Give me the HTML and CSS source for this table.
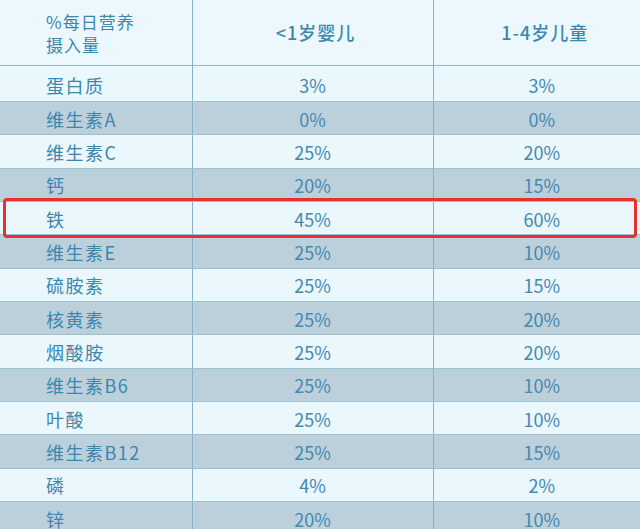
FILE: index.html
```html
<!DOCTYPE html>
<html lang="zh-CN">
<head>
<meta charset="utf-8">
<title>每日营养摄入量</title>
<link rel="stylesheet" href="styles.css">
</head>
<body>
<div class="sheet">
  <table class="nutri">
    <colgroup>
      <col class="c-name">
      <col class="c-infant">
      <col class="c-child">
    </colgroup>
    <thead>
      <tr>
        <th class="name">%每日营养<br>摄入量</th>
        <th>&lt;1岁婴儿</th>
        <th>1-4岁儿童</th>
      </tr>
    </thead>
    <tbody>
      <tr class="first"><td class="name">蛋白质</td><td>3%</td><td>3%</td></tr>
      <tr class="alt"><td class="name">维生素A</td><td>0%</td><td>0%</td></tr>
      <tr><td class="name">维生素C</td><td>25%</td><td>20%</td></tr>
      <tr class="alt"><td class="name">钙</td><td>20%</td><td>15%</td></tr>
      <tr><td class="name">铁</td><td>45%</td><td>60%</td></tr>
      <tr class="alt"><td class="name">维生素E</td><td>25%</td><td>10%</td></tr>
      <tr><td class="name">硫胺素</td><td>25%</td><td>15%</td></tr>
      <tr class="alt"><td class="name">核黄素</td><td>25%</td><td>20%</td></tr>
      <tr><td class="name">烟酸胺</td><td>25%</td><td>20%</td></tr>
      <tr class="alt"><td class="name">维生素B6</td><td>25%</td><td>10%</td></tr>
      <tr><td class="name">叶酸</td><td>25%</td><td>10%</td></tr>
      <tr class="alt"><td class="name">维生素B12</td><td>25%</td><td>15%</td></tr>
      <tr><td class="name">磷</td><td>4%</td><td>2%</td></tr>
      <tr class="alt"><td class="name">锌</td><td>20%</td><td>10%</td></tr>
    </tbody>
  </table>
  <div class="highlight"></div>
</div>
</body>
</html>
```

FILE: styles.css
```css
html, body {
  margin: 0;
  padding: 0;
  background: #eaf7fd;
  overflow: hidden;
}

.sheet {
  position: relative;
  width: 640px;
  height: 529px;
  overflow: hidden;
}

.nutri {
  width: 650px;
  border-collapse: collapse;
  table-layout: fixed;
  font-family: "Noto Sans CJK SC", "Noto Sans", sans-serif;
  color: #3b87ae;
  font-size: 18px;
}

.c-name { width: 192px; }
.c-infant { width: 241px; }
.c-child { width: 217px; }

.nutri th,
.nutri td {
  padding: 0;
  text-align: center;
  border-left: 1px solid #8bb1c8;
  border-bottom: 1px solid #9dc0d3;
  white-space: nowrap;
}

.nutri th:first-child,
.nutri td:first-child {
  border-left: none;
}

.nutri thead th {
  height: 65px;
  font-weight: 500;
  line-height: 23px;
  letter-spacing: 1px;
  background: #ecf8fd;
  border-bottom: 1px solid #93b8cc;
}

.nutri thead th:not(.name) {
  padding-left: 6px;
}

.nutri .name {
  text-align: left;
  padding-left: 46px;
  letter-spacing: 1.5px;
}

.nutri thead th.name {
  font-size: 17px;
  font-weight: 400;
  letter-spacing: 1px;
  padding-top: 0;
  padding-left: 46px;
  vertical-align: middle;
}

.nutri tbody td {
  height: 33.33px;
  line-height: 20px;
  padding-top: 1px;
  box-sizing: border-box;
  color: #4389b0;
  background: #eaf7fd;
}

.nutri tbody tr.first td {
  height: 36px;
  padding-top: 3px;
}

.nutri tbody td.name {
  color: #3b87ae;
}

.nutri tbody tr.alt td {
  background: #bcd0dc;
}

.highlight {
  position: absolute;
  left: 3px;
  top: 198px;
  width: 628px;
  height: 34px;
  border: 3px solid #e8302c;
  border-radius: 4px;
  pointer-events: none;
}
```
